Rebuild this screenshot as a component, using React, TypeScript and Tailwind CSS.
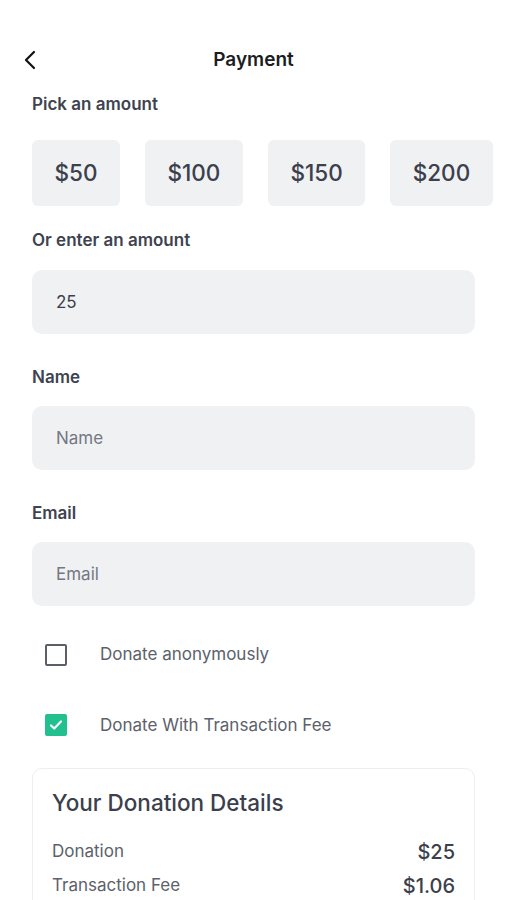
import React, { useState } from 'react';

const amounts = ['$50', '$100', '$150', '$200'];

const Field: React.FC<{ label: string; placeholder: string; value?: string }> = ({ label, placeholder, value }) => (
    <div className="flex flex-col">
        <label className="text-[17px] font-semibold text-[#3e4350] leading-5 mt-[33px] mb-[19px]">{label}</label>
        <input
            type="text"
            defaultValue={value}
            placeholder={placeholder}
            className="h-16 w-full rounded-[10px] bg-[#f0f1f3] px-6 text-[17px] text-[#3a3f4b] placeholder:text-[#737883] outline-none"
        />
    </div>
);

const Check: React.FC<{ checked: boolean; label: string; onToggle: () => void }> = ({ checked, label, onToggle }) => (
    <label className="flex items-center gap-[33px]" onClick={onToggle}>
        <span className={`flex h-[22px] w-[22px] items-center justify-center rounded-[2px] ${checked ? 'bg-[#22c08f]' : 'border-2 border-[#5b5f66] bg-white'}`}>
            {checked && (
                <svg width="16" height="16" viewBox="0 0 16 16" fill="none">
                    <path d="M3 8.5l3.2 3L13 4.5" stroke="#fff" strokeWidth="2.2" strokeLinecap="round" strokeLinejoin="round" />
                </svg>
            )}
        </span>
        <span className="text-[17px] text-[#5c616b]">{label}</span>
    </label>
);

export default function App() {
    const [anon, setAnon] = useState(false);
    const [withFee, setWithFee] = useState(true);

    return (
        <div className="h-[900px] w-[507px] overflow-hidden bg-white font-['Inter',sans-serif]">
            <div className="relative flex h-6 items-center justify-center mt-[48px]">
                <button className="absolute left-[22px] top-[2px] p-0">
                    <svg width="16" height="20" viewBox="0 0 16 20" fill="none">
                        <path d="M12 2L4 10l8 8" stroke="#111" strokeWidth="2.2" strokeLinecap="round" strokeLinejoin="round" />
                    </svg>
                </button>
                <h1 className="text-[19px] font-semibold leading-6 text-[#1b1d22]">Payment</h1>
            </div>

            <div className="px-8">
                <p className="mt-[22px] text-[17px] font-semibold leading-5 text-[#3e4350]">Pick an amount</p>

                <div className="mt-[26px] flex gap-[25px] -mr-8 overflow-hidden">
                    {amounts.map((a) => (
                        <button
                            key={a}
                            className="flex h-[66px] shrink-0 items-center rounded-[6px] bg-[#f0f1f3] px-[22.5px] text-[22.5px] font-medium text-[#3b404c]"
                        >
                            {a}
                        </button>
                    ))}
                </div>

                <p className="mt-[24px] mb-[20px] text-[17px] font-semibold leading-5 text-[#3e4350]">Or enter an amount</p>
                <input
                    type="text"
                    defaultValue="25"
                    className="h-16 w-full rounded-[10px] bg-[#f0f1f3] px-6 text-[17px] text-[#3a3f4b] outline-none"
                />

                <Field label="Name" placeholder="Name" />
                <Field label="Email" placeholder="Email" />

                <div className="mt-[36px] flex flex-col gap-[45px] pl-[13px]">
                    <Check checked={anon} label="Donate anonymously" onToggle={() => setAnon(!anon)} />
                    <Check checked={withFee} label="Donate With Transaction Fee" onToggle={() => setWithFee(!withFee)} />
                </div>

                <div className="mt-[30px] rounded-[10px] border border-[#eceef0] px-[19px] pt-[20px] pb-6">
                    <h2 className="text-[22.5px] font-medium leading-7 text-[#3b404c]">Your Donation Details</h2>
                    <div className="mt-[20px] flex items-center justify-between">
                        <span className="text-[17px] text-[#5c616b]">Donation</span>
                        <span className="text-[20px] font-medium text-[#3b404c]">$25</span>
                    </div>
                    <div className="mt-[4px] flex items-center justify-between">
                        <span className="text-[17px] text-[#5c616b]">Transaction Fee</span>
                        <span className="text-[20px] font-medium text-[#3b404c]">$1.06</span>
                    </div>
                </div>
            </div>
        </div>
    );
}
